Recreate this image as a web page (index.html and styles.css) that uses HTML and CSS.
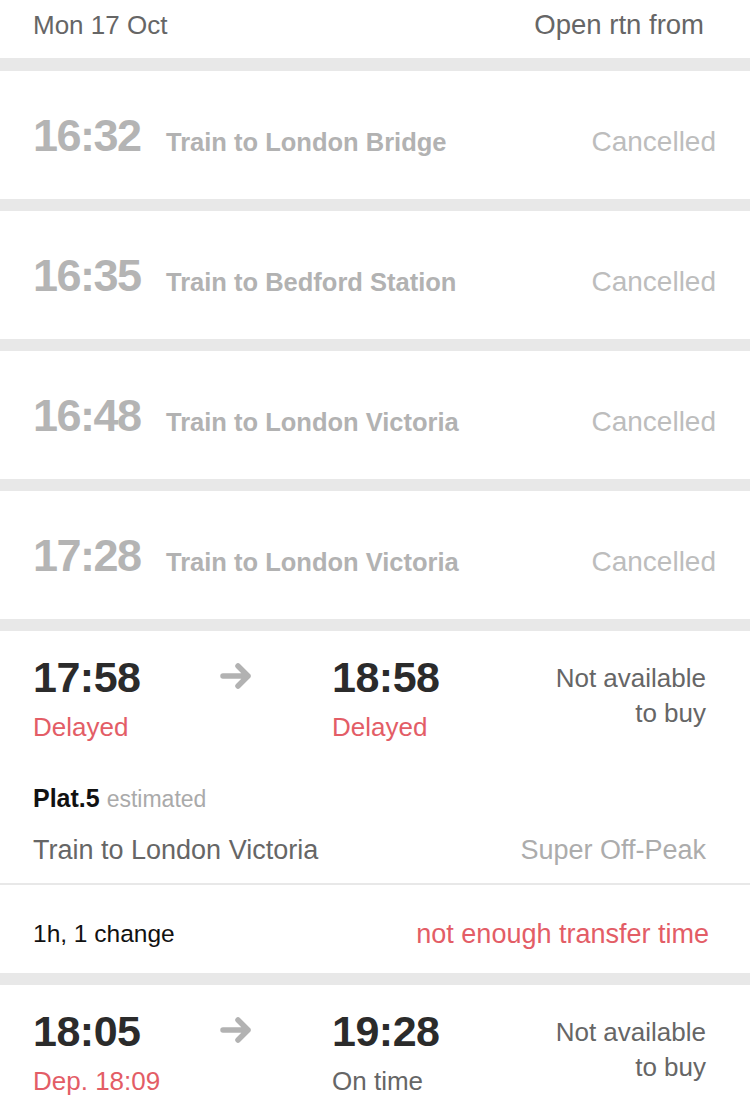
FILE: index.html
```html
<!DOCTYPE html>
<html>
<head>
    <meta charset="UTF-8">
    <title>Journeys</title>
    <link rel="stylesheet" href="styles.css">
</head>
<body>
    <div class="date-bar">
        <span>Mon 17 Oct</span>
        <span class="open-rtn">Open rtn from</span>
    </div>

    <!-- Cancelled trains -->
    <div class="card cancelled">
        <span class="c-time">16:32</span>
        <span class="c-name">Train to London Bridge</span>
        <span class="c-status">Cancelled</span>
    </div>
    <div class="card cancelled">
        <span class="c-time">16:35</span>
        <span class="c-name">Train to Bedford Station</span>
        <span class="c-status">Cancelled</span>
    </div>
    <div class="card cancelled">
        <span class="c-time">16:48</span>
        <span class="c-name">Train to London Victoria</span>
        <span class="c-status">Cancelled</span>
    </div>
    <div class="card cancelled">
        <span class="c-time">17:28</span>
        <span class="c-name">Train to London Victoria</span>
        <span class="c-status">Cancelled</span>
    </div>

    <!-- Journey with change -->
    <div class="card journey">
        <div class="journey-main">
            <div class="times">
                <div class="time-col">
                    <div class="time">17:58</div>
                    <div class="status red">Delayed</div>
                </div>
                <svg class="arrow" width="32" height="26" viewBox="0 0 32 26">
                    <path d="M3 13 H28 M18 3 L28 13 L18 23" fill="none" stroke="#b2b2b2" stroke-width="5.5" stroke-linecap="round" stroke-linejoin="round"/>
                </svg>
                <div class="time-col">
                    <div class="time">18:58</div>
                    <div class="status red">Delayed</div>
                </div>
                <div class="price">Not available<br>to buy</div>
            </div>
            <div class="platform"><b>Plat.5</b> <span>estimated</span></div>
            <div class="route">
                <span>Train to London Victoria</span>
                <span class="fare">Super Off-Peak</span>
            </div>
        </div>
        <div class="changes">
            <span>1h, 1 change</span>
            <span class="red">not enough transfer time</span>
        </div>
    </div>

    <div class="card journey">
        <div class="journey-main">
            <div class="times">
                <div class="time-col">
                    <div class="time">18:05</div>
                    <div class="status red">Dep. 18:09</div>
                </div>
                <svg class="arrow" width="32" height="26" viewBox="0 0 32 26">
                    <path d="M3 13 H28 M18 3 L28 13 L18 23" fill="none" stroke="#b2b2b2" stroke-width="5.5" stroke-linecap="round" stroke-linejoin="round"/>
                </svg>
                <div class="time-col">
                    <div class="time">19:28</div>
                    <div class="status">On time</div>
                </div>
                <div class="price">Not available<br>to buy</div>
            </div>
        </div>
    </div>
</body>
</html>
```

FILE: styles.css
```css
body {
    margin: 0;
    background-color: #e8e8e8;
    font-family: "Liberation Sans", Arial, sans-serif;
    color: #2b2b2b;
}
.date-bar {
    display: flex;
    justify-content: space-between;
    height: 58px;
    padding: 5px 46px 0 33px;
    box-sizing: border-box;
    line-height: 40px;
    font-size: 26px;
    color: #666;
    background-color: #fff;
    margin-bottom: 13px;
}
.open-rtn {
    font-size: 27.5px;
}
.card {
    background-color: #fff;
    margin-bottom: 12px;
}
.cancelled {
    display: flex;
    align-items: baseline;
    height: 128px;
    box-sizing: border-box;
    padding: 42px 34px 0 33px;
}
.c-time {
    width: 133px;
    font-size: 45px;
    line-height: 45px;
    font-weight: bold;
    letter-spacing: -1.5px;
    color: #b4b4b4;
}
.c-name {
    flex: 1;
    font-size: 25.5px;
    font-weight: bold;
    color: #b2b2b2;
}
.c-status {
    font-size: 28px;
    color: #bdbdbd;
}
.journey-main {
    padding: 21px 44px 15px 33px;
    border-bottom: 2px solid #e8e8e8;
}
.times {
    display: flex;
    align-items: flex-start;
}
.time-col {
    width: 187px;
}
.time-col + .arrow + .time-col {
    flex: 1;
}
.time {
    font-size: 43px;
    font-weight: bold;
    line-height: 50px;
    letter-spacing: -0.5px;
}
.status {
    font-size: 26px;
    line-height: 36px;
    margin-top: 7px;
    color: #666;
}
.red {
    color: #e35d66;
}
.status.red {
    color: #e35d66;
}
.arrow {
    margin: 11px 80px 0 0;
}
.price {
    text-align: right;
    font-size: 26px;
    line-height: 35px;
    color: #666;
    padding-top: 9px;
}
.platform {
    margin-top: 36px;
    font-size: 25px;
    line-height: 34px;
}
.platform b {
    color: #111;
}
.platform span {
    font-size: 23px;
    color: #aaa;
}
.route {
    display: flex;
    justify-content: space-between;
    margin-top: 16px;
    font-size: 27px;
    line-height: 36px;
    color: #666;
}
.fare {
    color: #acacac;
}
.changes {
    display: flex;
    justify-content: space-between;
    padding: 31px 41px 21px 33px;
    font-size: 24.5px;
    line-height: 36px;
    color: #111;
}
.changes .red {
    font-size: 27px;
}
```
